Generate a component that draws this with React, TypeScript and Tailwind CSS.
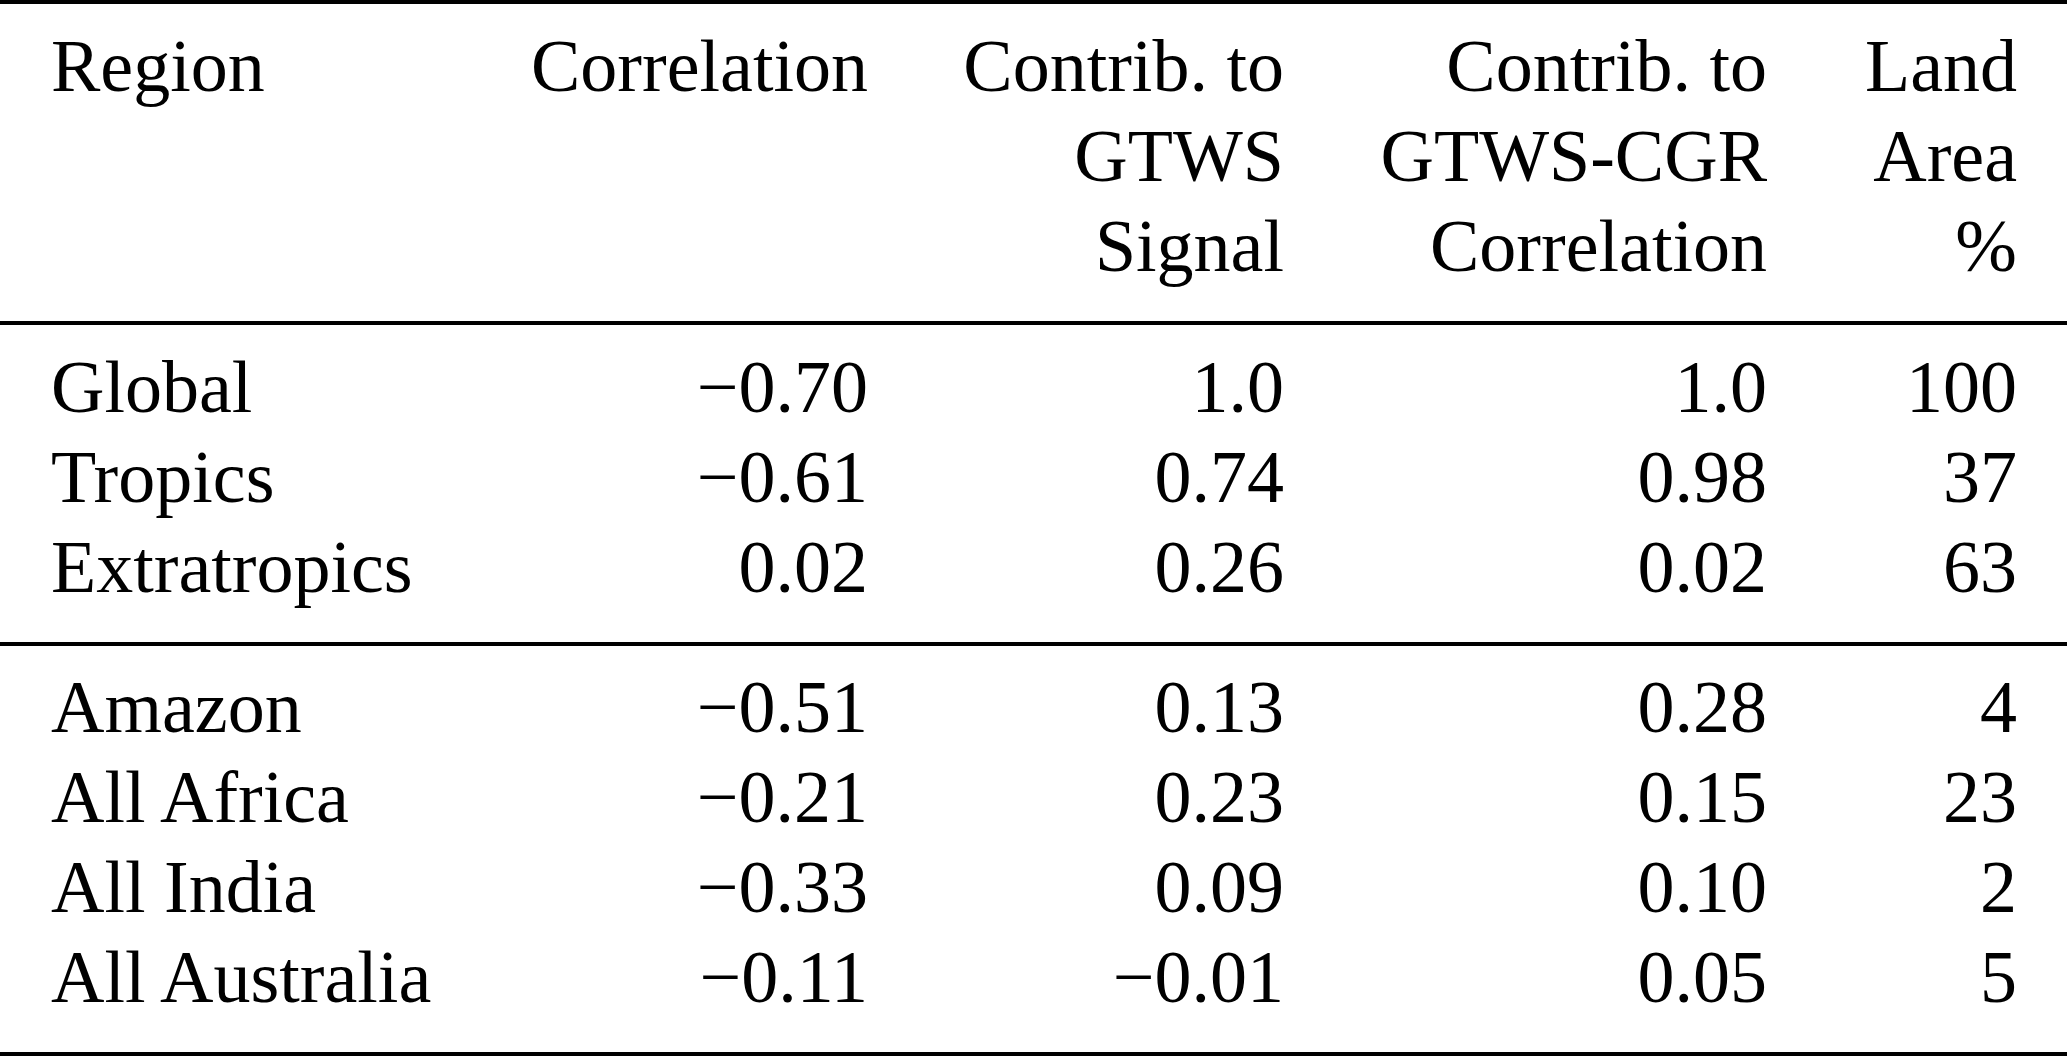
const head = [
  ['Region', '', ''],
  ['Correlation', '', ''],
  ['Contrib. to', 'GTWS', 'Signal'],
  ['Contrib. to', 'GTWS-CGR', 'Correlation'],
  ['Land', 'Area', '%'],
];

const groupA = [
  ['Global', '−0.70', '1.0', '1.0', '100'],
  ['Tropics', '−0.61', '0.74', '0.98', '37'],
  ['Extratropics', '0.02', '0.26', '0.02', '63'],
];

const groupB = [
  ['Amazon', '−0.51', '0.13', '0.28', '4'],
  ['All Africa', '−0.21', '0.23', '0.15', '23'],
  ['All India', '−0.33', '0.09', '0.10', '2'],
  ['All Australia', '−0.11', '−0.01', '0.05', '5'],
];

const cols = 'grid grid-cols-[400px_417px_416px_483px_250px] px-[51px]';

function Rule() {
  return <div className="h-[4px] w-full bg-black" />;
}

function Rows({ rows }: { rows: string[][] }) {
  return (
    <>
      {rows.map((r) => (
        <div key={r[0]} className={cols}>
          {r.map((cell, i) => (
            <div key={i} className={i === 0 ? 'text-left whitespace-nowrap' : 'text-right whitespace-nowrap'}>
              {cell}
            </div>
          ))}
        </div>
      ))}
    </>
  );
}

export default function App() {
  return (
    <div
      className="w-[2067px] h-[1057px] bg-white text-black text-[74px] leading-[90px]"
      style={{ fontFamily: '"Liberation Serif", "Times New Roman", serif' }}
    >
      <Rule />

      {/* header */}
      <div className={`${cols} pt-[17px] pb-[30px]`}>
        {head.map((lines, i) => (
          <div key={i} className={i === 0 ? 'flex flex-col items-start' : 'flex flex-col items-end'}>
            {lines.map((l, j) => (
              <div key={j} className="h-[90px] whitespace-nowrap">
                {l}
              </div>
            ))}
          </div>
        ))}
      </div>

      <Rule />

      <div className="pt-[17px] pb-[30px]">
        <Rows rows={groupA} />
      </div>

      <Rule />

      <div className="pt-[16px] pb-[30px]">
        <Rows rows={groupB} />
      </div>

      <Rule />
    </div>
  );
}
